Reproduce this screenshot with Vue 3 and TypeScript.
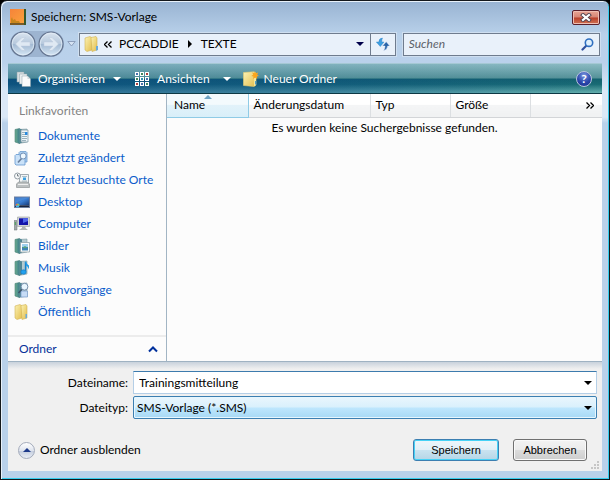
<script setup lang="ts">
import { ref } from 'vue'

interface Place {
  icon: string
  label: string
}

const places: Place[] = [
  { icon: 'documents', label: 'Dokumente' },
  { icon: 'changed', label: 'Zuletzt geändert' },
  { icon: 'visited', label: 'Zuletzt besuchte Orte' },
  { icon: 'desktop', label: 'Desktop' },
  { icon: 'computer', label: 'Computer' },
  { icon: 'pictures', label: 'Bilder' },
  { icon: 'music', label: 'Musik' },
  { icon: 'searches', label: 'Suchvorgänge' },
  { icon: 'public', label: 'Öffentlich' },
]

const binderIcons = ['documents', 'pictures', 'music', 'searches']

const fileName = ref('Trainingsmitteilung')
const fileType = ref('sms')
const query = ref('')
</script>

<template>
  <form class="window" @submit.prevent>
    <svg class="defs" width="0" height="0" aria-hidden="true">
      <defs>
        <linearGradient id="folder" x1="0" x2="1" y1="0" y2="1">
          <stop offset="0" stop-color="#fbf2b4" />
          <stop offset="1" stop-color="#e3bd4c" />
        </linearGradient>
        <linearGradient id="binder" x1="0" x2="1" y1="0" y2="0">
          <stop offset="0" stop-color="#6fae8f" />
          <stop offset="1" stop-color="#3c7f8c" />
        </linearGradient>
        <linearGradient id="screen" x1="0" x2="1" y1="0" y2="1">
          <stop offset="0" stop-color="#2c5fae" />
          <stop offset="0.5" stop-color="#3b7fd4" />
          <stop offset="1" stop-color="#173d7c" />
        </linearGradient>
        <linearGradient id="orb" x1="0" x2="0" y1="0" y2="1">
          <stop offset="0" stop-color="#dbe5f0" />
          <stop offset="0.48" stop-color="#b7c9dd" />
          <stop offset="0.52" stop-color="#a3bad3" />
          <stop offset="1" stop-color="#d8e8f6" />
        </linearGradient>
        <linearGradient id="sunset" x1="0" x2="1" y1="0" y2="1">
          <stop offset="0" stop-color="#f5833a" />
          <stop offset="1" stop-color="#fba13c" />
        </linearGradient>
      </defs>
    </svg>

    <header class="titlebar">
      <svg class="icon" width="16" height="16" viewBox="0 0 16 16">
        <rect width="16" height="16" fill="#36592c" />
        <rect width="14" height="14" fill="url(#sunset)" />
        <path d="M1 14V10l1-2 1 3 2-1 1 2h3l1 2z" fill="#c8861c" />
        <path d="M0 14h14v2H0z" fill="#7a5a26" />
      </svg>
      <h1>Speichern: SMS-Vorlage</h1>
      <button type="button" class="close" aria-label="Schließen">
        <svg width="12" height="9" viewBox="0 0 12 9">
          <path d="M3 2l6 5M9 2l-6 5" stroke="#52404c" stroke-width="4" stroke-linecap="square" />
          <path d="M3 2l6 5M9 2l-6 5" stroke="#fff" stroke-width="2.2" stroke-linecap="square" />
        </svg>
      </button>
    </header>

    <nav class="navrow">
      <div class="travel">
        <button type="button" aria-label="Zurück">
          <svg width="26" height="26" viewBox="0 0 26 26">
            <circle cx="13" cy="13" r="12" fill="url(#orb)" stroke="#64748f" stroke-width="1.2" />
            <circle cx="13" cy="13" r="10.8" fill="none" stroke="#e6eff8" stroke-opacity=".7" />
            <path d="M5.5 13l6.500-6.500h3.500l-4.500 4.500h9v4h-9l4.500 4.500H12z" fill="#dfe9f3" stroke="#bccbdd" stroke-width=".5" />
          </svg>
        </button>
        <button type="button" aria-label="Vorwärts">
          <svg width="26" height="26" viewBox="0 0 26 26">
            <circle cx="13" cy="13" r="12" fill="url(#orb)" stroke="#64748f" stroke-width="1.2" />
            <circle cx="13" cy="13" r="10.800" fill="none" stroke="#e6eff8" stroke-opacity=".7" />
            <path d="M20.5 13L14 6.500h-3.500L15 11H6v4h9l-4.500 4.500H14z" fill="#dfe9f3" stroke="#bccbdd" stroke-width=".5" />
          </svg>
        </button>
      </div>
      <button type="button" class="history" aria-label="Zuletzt besuchte Seiten">
        <svg width="9" height="6" viewBox="0 0 9 6"><path d="M.8.500h7.400L4.500 5z" fill="#d5e3f3" stroke="#8799b5" stroke-width=".9" /></svg>
      </button>
      <div class="address">
        <svg class="icon" width="16" height="16" viewBox="0 0 16 16">
          <path d="M1 2l5-1.500L8 2v12l-5 1.500L1 14z" fill="url(#folder)" stroke="#d2b456" stroke-width=".6" />
          <path d="M7 1.500l5-1L13 2v12l-5 1.500z" fill="url(#folder)" stroke="#d2b456" stroke-width=".6" />
          <path d="M12 10h2v4l-2 .8z" fill="#69aadb" />
        </svg>
        <button type="button" class="chevrons" aria-label="Übergeordnete Ordner">
          <svg width="8" height="7" viewBox="0 0 8 7"><path d="M3.500.500l-3 3 3 3M7.500.500l-3 3 3 3" fill="none" stroke="#000" stroke-width="1.300" /></svg>
        </button>
        <a href="#pccaddie">PCCADDIE</a>
        <svg class="crumb" width="4" height="8" viewBox="0 0 4 8"><path d="M0 0l4 4-4 4z" fill="#000" /></svg>
        <a href="#texte">TEXTE</a>
        <button type="button" class="drop" aria-label="Vorherige Orte">
          <svg width="8" height="4" viewBox="0 0 8 4"><path d="M0 0h8L4 4z" fill="#00004a" /></svg>
        </button>
        <button type="button" class="refresh" aria-label="Aktualisieren">
          <svg width="14" height="14" viewBox="0 0 14 14">
            <path d="M6.500 1Q3 1.200 2.800 5H.3l4 4.500L8 5H5.800Q5.500 2.800 6.500 1z" fill="#3e9fe0" stroke="#2c7fc4" stroke-width=".4" />
            <path d="M7.500 13.500Q11.200 13 11.600 9h2.200L10.200 4.800 6.500 9h2.600Q9 11.800 7.500 13.500z" fill="#2a64a8" stroke="#e9f1fa" stroke-width=".4" />
          </svg>
        </button>
      </div>
      <div class="search">
        <input v-model="query" type="text" placeholder="Suchen" aria-label="Suchen" />
        <svg width="13" height="13" viewBox="0 0 13 13">
          <path d="M5.500 7.500L1.500 11.500" stroke="#2f4f9c" stroke-width="2.200" stroke-linecap="round" />
          <circle cx="8" cy="4.700" r="3.700" fill="#dff0fc" stroke="#2f6fc0" stroke-width="1.600" />
        </svg>
      </div>
    </nav>

    <div class="toolbar">
      <button type="button" class="tool organise">
        <svg class="icon" width="16" height="16" viewBox="0 0 16 16">
          <path d="M1 1h7v10H1z" fill="#d6dde0" stroke="#8fa2aa" stroke-width=".5" />
          <path d="M3.500 3H11v10H3.500z" fill="#e8edee" stroke="#8fa2aa" stroke-width=".5" />
          <path d="M6 5h5.500L14.500 8v7.500H6z" fill="#fafbfb" stroke="#8fa2aa" stroke-width=".5" />
          <path d="M11.500 5v3h3z" fill="#cfd8dc" />
        </svg>
        <span>Organisieren</span>
        <svg class="caret" width="8" height="4" viewBox="0 0 8 4"><path d="M0 0h8L4 4z" fill="#fff" /></svg>
      </button>
      <button type="button" class="tool views">
        <svg class="icon" width="14" height="14" viewBox="0 0 14 14">
          <path d="M0 0h4v4H0zM5 0h4v4H5zM10 0h4v4h-4zM0 5h4v4H0zM5 5h4v4H5zM10 5h4v4h-4zM0 10h4v4H0zM5 10h4v4H5zM10 10h4v4h-4z" fill="#fff" />
          <path d="M1 1h2v2H1zM11 6h2v2h-2zM6 11h2v2H6z" fill="#4a72ac" />
          <path d="M6 1h2v2H6zM1 6h2v2H1zM11 11h2v2h-2z" fill="#43865f" />
          <path d="M11 1h2v2h-2zM1 11h2v2H1z" fill="#b0413e" />
          <path d="M6 6h2v2H6z" fill="#348fae" />
        </svg>
        <span>Ansichten</span>
        <svg class="caret" width="8" height="4" viewBox="0 0 8 4"><path d="M0 0h8L4 4z" fill="#fff" /></svg>
      </button>
      <button type="button" class="tool create">
        <svg class="icon" width="16" height="16" viewBox="0 0 16 16">
          <path d="M.5 1.500L11 .8l2 1.200v12L11 15.500.5 14.500z" fill="url(#folder)" stroke="#e6cf72" stroke-width=".6" />
          <path d="M11 6l2 1v7l-2 1.300z" fill="#f4e79d" />
          <path d="M12 10h1.300v3.500H12z" fill="#4f9cc9" />
          <path d="M12 0l.8 2.300 2.400-.8-1 2.200L16 5l-2.200.6.4 2.400-2-1.400-2 1.400.3-2.400L8.300 5l1.900-1.200-1-2.300 2.200.8z" fill="#f9a51d" />
        </svg>
        <span>Neuer Ordner</span>
      </button>
      <button type="button" class="help" aria-label="Hilfe"><span>?</span></button>
    </div>

    <div class="body">
      <aside class="sidebar">
        <h2>Linkfavoriten</h2>
        <ul>
          <li v-for="place in places" :key="place.icon">
            <a :href="'#' + place.icon">
              <svg class="icon" width="16" height="16" viewBox="0 0 16 16">
                <template v-if="binderIcons.includes(place.icon)">
                  <path d="M4 1.500L13 1v13l-8 1.500z" fill="#b4cbd0" stroke="#7d9aa2" stroke-width=".6" />
                  <path d="M1 1.500L5.500.5v15L1 14z" fill="url(#binder)" stroke="#467f76" stroke-width=".6" />
                  <path d="M5.500.5L8 1.500v13l-2.500 1z" fill="#528795" />
                </template>
                <template v-if="place.icon === 'documents'">
                  <path d="M7 2h7v12H7z" fill="#eef5f8" stroke="#76929e" stroke-width=".7" />
                  <path d="M8 4.500h3M8 6.500h3M8 8.500h5M8 10.500h5M8 12.500h4" stroke="#84a1ad" stroke-width=".8" />
                  <path d="M11 4h2.500v3H11z" fill="#2a8ade" />
                </template>
                <template v-else-if="place.icon === 'changed'">
                  <path d="M5 2.500l1-1h6l1 1V12H5z" fill="#a9cdf0" stroke="#6f9dce" stroke-width=".8" />
                  <path d="M1 5.500l1-1h3l1 1h5V15H2l-1-1z" fill="#c9e1f8" stroke="#6598cf" stroke-width=".8" />
                  <path d="M7.500 8.500L4 12.500" stroke="#6a7f9b" stroke-width="1.600" />
                  <circle cx="9.200" cy="6" r="3" fill="#eef8ff" stroke="#7391b6" />
                </template>
                <template v-else-if="place.icon === 'visited'">
                  <path d="M5.500 2.500h9V11h-9z" fill="#f2f5f6" stroke="#8c979f" stroke-width=".8" />
                  <path d="M8 4.500h5M8 9h5" stroke="#9ab0bd" stroke-width=".8" />
                  <path d="M9 5.500h3v2.500H9z" fill="#3a9fe0" />
                  <path d="M2.500 12l2-2h9l2 2v3.500h-13z" fill="#bcc0c1" stroke="#85898b" stroke-width=".6" />
                  <path d="M4 12.500h10" stroke="#eee" />
                  <circle cx="3.500" cy="4" r="3" fill="#f7f9fa" stroke="#929ca3" />
                  <path d="M3.500 2v2H5" fill="none" stroke="#59646c" stroke-width=".8" />
                </template>
                <template v-else-if="place.icon === 'desktop'">
                  <path d="M0 2.500h16v11.500H0z" fill="#6d7f9e" />
                  <path d="M1 3.500h14V11H1z" fill="url(#screen)" />
                  <path d="M1 3.500h14L1 9z" fill="#5c9be4" opacity=".5" />
                  <path d="M1 11.500h14v1.500H1z" fill="#17233c" />
                  <circle cx="3.500" cy="11.500" r="2" fill="#3db0ef" />
                  <path d="M3.500 9.500a2 2 0 0 1 2 2h-2z" fill="#8ed14a" />
                  <path d="M3.500 9.500a2 2 0 0 0-2 2h2z" fill="#ef6a3c" />
                </template>
                <template v-else-if="place.icon === 'computer'">
                  <path d="M0 4.500h3V14H0z" fill="#a2a9aa" stroke="#6f7879" stroke-width=".5" />
                  <path d="M.8 6h1v3h-1z" fill="#4aa25a" />
                  <path d="M3.500 1h12v9.500h-12z" fill="#d3d6d4" stroke="#9aa09d" stroke-width=".6" />
                  <path d="M5 2.300h9V9H5z" fill="#1414a8" />
                  <path d="M9 2.300h5V5L9 7z" fill="#4d64ea" />
                  <path d="M8 10.500h3.500V12L14 14H5l3-2z" fill="#b1b5b3" />
                </template>
                <template v-else-if="place.icon === 'pictures'">
                  <path d="M6.500 4.500h9V14h-9z" fill="#fff" stroke="#93a3aa" stroke-width=".8" />
                  <path d="M8 6h6v3H8z" fill="#9fd1ef" />
                  <path d="M8 9h6v3.500H8z" fill="#3f85b5" />
                  <path d="M8 10l3-2 3 2z" fill="#5aa27b" />
                </template>
                <template v-else-if="place.icon === 'music'">
                  <path d="M11.500 2v9.500" stroke="#1583d0" stroke-width="1.400" />
                  <path d="M11 1.500h1q.5 2.500 3 4 .3 2-.8 4Q14.500 6.500 12 5.500z" fill="#1f9be8" />
                  <ellipse cx="9.500" cy="12" rx="2.700" ry="2.200" fill="#22a1ee" stroke="#1275c0" stroke-width=".6" />
                </template>
                <template v-else-if="place.icon === 'searches'">
                  <path d="M7 9h6.500v6H7z" fill="#c7dcf6" stroke="#7699c6" stroke-width=".7" />
                  <path d="M8.500 6.500L4.500 11" stroke="#3f5167" stroke-width="1.500" />
                  <circle cx="10.500" cy="4.700" r="3.400" fill="#e9f6ff" stroke="#7790ac" />
                </template>
                <template v-else-if="place.icon === 'public'">
                  <path d="M1 2l5-1.500L8 2v12l-5 1.500L1 14z" fill="url(#folder)" stroke="#d2b456" stroke-width=".6" />
                  <path d="M7 1.500l5-1L13 2v12l-5 1.500z" fill="url(#folder)" stroke="#d2b456" stroke-width=".6" />
                  <path d="M11.500 10h1.500v4l-1.500.5z" fill="#69aadb" />
                </template>
              </svg>
              <span>{{ place.label }}</span>
            </a>
          </li>
        </ul>
        <button type="button" class="folders">
          <span>Ordner</span>
          <svg width="10" height="7" viewBox="0 0 10 7"><path d="M1 5.500l4-4 4 4" fill="none" stroke="#00309c" stroke-width="2" /></svg>
        </button>
      </aside>

      <main class="files">
        <table>
          <thead>
            <tr>
              <th class="sorted">
                Name
                <svg width="8" height="4" viewBox="0 0 8 4"><path d="M4 0l4 4H0z" fill="#6fa3c4" /></svg>
              </th>
              <th class="date">Änderungsdatum</th>
              <th class="kind">Typ</th>
              <th class="size">Größe</th>
              <th class="more">
                <button type="button" aria-label="Weitere Spalten">
                  <svg width="8" height="7" viewBox="0 0 8 7"><path d="M.5.500l3 3-3 3M4.500.500l3 3-3 3" fill="none" stroke="#000" stroke-width="1.300" /></svg>
                </button>
              </th>
            </tr>
          </thead>
          <tbody>
            <tr>
              <td colspan="5">Es wurden keine Suchergebnisse gefunden.</td>
            </tr>
          </tbody>
        </table>
      </main>
    </div>

    <footer class="panel">
      <div class="fields">
        <label for="file-name">Dateiname:</label>
        <div class="combo">
          <input id="file-name" v-model="fileName" type="text" />
          <button type="button" aria-label="Frühere Namen">
            <svg width="8" height="4" viewBox="0 0 8 4"><path d="M0 0h8L4 4z" fill="#000" /></svg>
          </button>
        </div>
        <label for="file-type">Dateityp:</label>
        <div class="picker">
          <select id="file-type" v-model="fileType">
            <option value="sms">SMS-Vorlage (*.SMS)</option>
          </select>
          <svg width="8" height="4" viewBox="0 0 8 4"><path d="M0 0h8L4 4z" fill="#000" /></svg>
        </div>
      </div>
      <div class="actions">
        <button type="button" class="toggle">
          <span class="knob">
            <svg width="8" height="4" viewBox="0 0 8 4"><path d="M4 0l4 4H0z" fill="#1d3a8a" /></svg>
          </span>
          <span>Ordner ausblenden</span>
        </button>
        <button type="submit" class="push save">Speichern</button>
        <button type="button" class="push cancel">Abbrechen</button>
      </div>
      <svg class="grip" width="8" height="8" viewBox="0 0 8 8">
        <path d="M6 0h2v2H6zM3 3h2v2H3zM6 3h2v2H6zM0 6h2v2H0zM3 6h2v2H3zM6 6h2v2H6z" fill="#c6c6c6" />
      </svg>
    </footer>
  </form>
</template>

<style>
body {
  background: #000;
}
</style>

<style scoped>
* {
  box-sizing: border-box;
}

.window {
  display: flex;
  flex-direction: column;
  min-height: 100vh;
  padding: 2px 7px 8px;
  border: 1px solid #14181c;
  border-radius: 7px 7px 0 0;
  background: linear-gradient(#98b3d2 0, #b9d1ea 34px, #bad1eb 62px, #dbe8f6 90px, #dbe8f6 116px, #b9d1ea 122px);
  box-shadow: inset 1px 1px 0 #e8f1fa, inset -1px -1px 0 #35cdee;
  color: #000;
  font-family: Lato, "Open Sans", sans-serif;
  font-size: 12px;
  line-height: 16px;
}

.defs {
  position: absolute;
}

button,
input,
select {
  margin: 0;
  padding: 0;
  border: 0;
  background: none;
  color: inherit;
  font: inherit;
}

svg {
  display: block;
  flex: none;
}

a {
  color: inherit;
  text-decoration: none;
}

.titlebar {
  display: flex;
  align-items: center;
  gap: 5px;
  height: 28px;
  padding: 0 2px;
}

h1 {
  flex: 1;
  margin: 0;
  font-size: 12px;
  font-weight: 400;
}

.close {
  display: flex;
  align-items: center;
  justify-content: center;
  width: 28px;
  height: 15px;
  border: 1px solid #5a1f2b;
  border-radius: 2px;
  background: linear-gradient(#e9a594, #d68575 48%, #b93f2a 52%, #cf7253);
  box-shadow: inset 0 0 0 1px #eebdb2;
}

.navrow {
  display: flex;
  align-items: center;
  height: 32px;
  padding: 0 2px 6px;
}

.travel {
  display: flex;
  gap: 2px;
  border-radius: 13px;
  background: #9db4d0;
}

.travel button {
  display: flex;
}

.history {
  padding: 4px 3px;
}

.address {
  display: flex;
  flex: 312;
  align-items: center;
  height: 23px;
  padding-left: 4px;
  border: 1px solid #6f7c8e;
  background: #e9f1fa;
  box-shadow: 0 0 0 1px #cfdff0;
}

.chevrons {
  padding: 4px 7px 4px 4px;
}

.crumb {
  margin: 0 9px;
}

.drop {
  display: flex;
  align-items: center;
  margin-left: auto;
  padding: 4px 6px;
}

.refresh {
  display: flex;
  align-items: center;
  justify-content: center;
  align-self: stretch;
  width: 25px;
  border-left: 1px solid #6f7c8e;
}

.search {
  display: flex;
  flex: 186;
  align-items: center;
  height: 23px;
  margin-left: 7px;
  padding: 0 5px;
  border: 1px solid #6f7c8e;
  background: #e9f1fa;
  box-shadow: 0 0 0 1px #cfdff0;
}

.search input {
  flex: 1;
  min-width: 0;
  outline: none;
  font-style: italic;
}

.search input::placeholder {
  color: #5c6269;
  opacity: 1;
}

.toolbar {
  display: flex;
  align-items: center;
  height: 31px;
  padding: 0 10px 0 8px;
  border-top: 1px solid #a5c8d4;
  border-bottom: 1px solid #0c3844;
  background:
    linear-gradient(90deg, #003c8478, #003c8450 50%, #003c8400) 0 100% / 100% 50% no-repeat,
    linear-gradient(90deg, #1c5a9430, #1c5a9400),
    linear-gradient(#8abac2, #559299 48%, #14626f 52%, #196b74 70%, #65b0ae);
  color: #fff;
  text-shadow: 0 1px 2px #0c3a48;
}

.tool {
  display: flex;
  align-items: center;
}

.tool .icon {
  margin-right: 6px;
}

.caret {
  margin-left: 8px;
}

.views {
  margin-left: 14px;
}

.views .icon {
  margin-right: 8px;
}

.views .caret {
  margin-left: 13px;
}

.create {
  margin-left: 12px;
}

.create .icon {
  margin-right: 5px;
}

.help {
  display: flex;
  align-items: center;
  justify-content: center;
  width: 16px;
  height: 16px;
  margin-left: auto;
  border: 1px solid #b9c4dd;
  border-radius: 50%;
  background: radial-gradient(circle at 50% 25%, #7b97e0, #2b47ab 55%, #1a2f8e);
  font-size: 12px;
  font-weight: 700;
  line-height: 14px;
  text-shadow: none;
}

.body {
  display: flex;
  flex: 1;
  min-height: 268px;
  border-bottom: 1px solid #9fb2c2;
  background: #fcfcfc;
}

.sidebar {
  display: flex;
  flex: none;
  flex-direction: column;
  width: 159px;
  border-right: 1px solid #a2b5c4;
}

h2 {
  margin: 0;
  padding: 9px 11px 6px;
  color: #838383;
  font-size: 12px;
  font-weight: 400;
}

ul {
  margin: 0;
  padding: 0;
  list-style: none;
}

li a {
  display: flex;
  align-items: center;
  gap: 8px;
  height: 22px;
  padding-left: 6px;
  color: #0b5ccb;
  white-space: nowrap;
}

.folders {
  display: flex;
  align-items: center;
  justify-content: space-between;
  height: 26px;
  margin-top: auto;
  padding: 0 8px 0 11px;
  border-top: 2px solid #ececec;
  color: #06319a;
}

.files {
  flex: 1;
  min-width: 0;
}

table {
  width: 100%;
  border-collapse: collapse;
  table-layout: fixed;
}

th {
  position: relative;
  height: 23px;
  padding: 0 0 0 5px;
  border-right: 1px solid #dcdfe2;
  border-bottom: 1px solid #d3d5d8;
  background: linear-gradient(#fff 45%, #f4f5f6 50%, #f0f1f2);
  font-weight: 400;
  text-align: left;
}

.sorted {
  width: 81px;
  padding-left: 7px;
  border-right-color: #8fcbe6;
  border-bottom-color: #8fcbe6;
  background: linear-gradient(#f3fafd 45%, #e1f2fa 50%, #d9eff9);
}

.sorted svg {
  position: absolute;
  top: 1px;
  left: 37px;
}

.date {
  width: 122px;
}

.kind,
.size {
  width: 80px;
}

.more {
  padding-right: 8px;
  border-right: 0;
}

.more button {
  display: block;
  margin-left: auto;
}

td {
  padding: 2px 0;
  text-align: center;
}

.panel {
  position: relative;
  padding: 9px 5px 10px 10px;
  background: linear-gradient(#c9d2dc, #f0f0f0 7px);
}

.fields {
  display: grid;
  grid-template-columns: 110px 1fr;
  gap: 2px 5px;
  align-items: center;
}

.fields label {
  text-align: right;
}

.combo {
  display: flex;
  height: 23px;
  border: 1px solid #b5cfe7;
  border-top-color: #3d7bad;
  background: #fff;
}

.combo input {
  flex: 1;
  min-width: 0;
  padding-left: 5px;
  outline: none;
}

.combo button {
  display: flex;
  align-items: center;
  padding: 0 4px;
}

.picker {
  position: relative;
}

.picker select {
  display: block;
  width: 100%;
  height: 23px;
  padding-left: 3px;
  border: 1px solid #3c7fb1;
  border-radius: 2px;
  appearance: none;
  background: linear-gradient(#eaf6fd, #d9f0fc 48%, #bee6fd 52%, #a7d9f5);
  box-shadow: inset 0 0 0 1px #e6f6fe;
}

.picker svg {
  position: absolute;
  top: 10px;
  right: 5px;
  pointer-events: none;
}

.actions {
  display: flex;
  align-items: center;
  gap: 14px;
  margin-top: 20px;
  padding-right: 10px;
}

.toggle {
  display: flex;
  align-items: center;
  gap: 5px;
  margin-right: auto;
}

.knob {
  display: flex;
  align-items: center;
  justify-content: center;
  width: 17px;
  height: 17px;
  border: 1px solid #a3abbb;
  border-radius: 50%;
  background: linear-gradient(#fff, #dfe4ee 50%, #c3ccdd 52%, #e9eef6);
}

.push {
  height: 22px;
  border: 1px solid #707070;
  border-radius: 3px;
  background: linear-gradient(#f3f3f3, #ebebeb 48%, #dcdcdc 52%, #cdcdcd);
  box-shadow: inset 0 0 0 1px #fafafa;
  font-family: "Liberation Sans", sans-serif;
  font-size: 11px;
}

.save {
  width: 86px;
  border-color: #3c7fb1;
  background: linear-gradient(#eef6fa, #e2f0f7 48%, #c9e3f0 52%, #b5d5e6);
  box-shadow: inset 0 0 0 1px #46d2f6;
}

.cancel {
  width: 74px;
}

.grip {
  position: absolute;
  right: 3px;
  bottom: 2px;
}
</style>
